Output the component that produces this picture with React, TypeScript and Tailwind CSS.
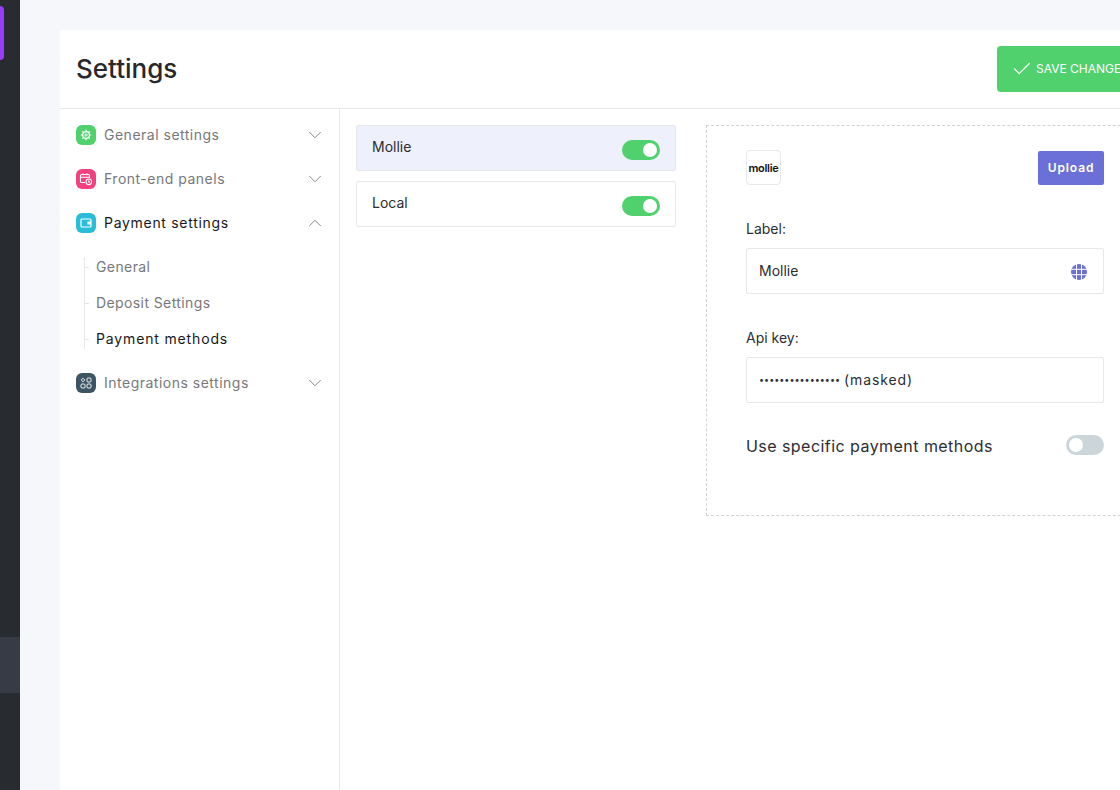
import React from "react";
import { Check, ChevronDown, ChevronUp } from "lucide-react";

const Toggle = ({ on = true }: { on?: boolean }) => {
  return on ? (
    <div className="flex h-5 w-[38px] items-center justify-end rounded-full bg-[#50d16e] pr-[3px]">
      <div className="h-[14px] w-[14px] rounded-full bg-white" />
    </div>
  ) : (
    <div className="flex h-5 w-[38px] items-center rounded-full bg-[#ccd6da] pl-[3px]">
      <div className="h-[14px] w-[14px] rounded-full bg-white" />
    </div>
  );
};

const GearIcon = () => (
  <svg viewBox="0 0 12 12" className="h-3 w-3" fill="none" stroke="white">
    <circle cx="6" cy="6" r="3.400" strokeWidth="1.200" />
    <circle cx="6" cy="6" r="1.100" strokeWidth="1" />
    <path d="M6 .8v1.600M6 9.600v1.600M.8 6h1.600M9.600 6h1.600M2.300 2.300l1.100 1.100M8.600 8.600l1.100 1.100M2.300 9.700l1.100-1.100M8.600 3.400l1.100-1.100" strokeWidth="1.200" />
  </svg>
);

const CalendarIcon = () => (
  <svg viewBox="0 0 14 14" className="h-[14px] w-[14px]" fill="none" stroke="white" strokeWidth="1.1">
    <path d="M6 10.500H2.500a1 1 0 0 1-1-1v-6a1 1 0 0 1 1-1h7a1 1 0 0 1 1 1V6" />
    <path d="M1.500 5.200h9M4 1.200v2M8 1.200v2" />
    <circle cx="9.800" cy="9.800" r="2.800" />
    <path d="M9.800 8.500v1.400h1.100" />
  </svg>
);

const WalletIcon = () => (
  <svg viewBox="0 0 12 12" className="h-3 w-3" fill="none" stroke="white" strokeWidth="1.200">
    <rect x="1" y="2" width="10" height="8" rx="1" />
    <path d="M11 5H8v2h3" fill="white" />
  </svg>
);

const AppsIcon = () => (
  <svg viewBox="0 0 12 12" className="h-3 w-3" fill="none" stroke="white" strokeWidth="0.900">
    <path d="M3 1.200 4.800 3 3 4.800 1.200 3z" />
    <rect x="7" y="1" width="4" height="4" rx="1" />
    <rect x="1" y="7" width="4" height="4" rx="1" />
    <rect x="7" y="7" width="4" height="4" rx="1" />
  </svg>
);

const GlobeIcon = () => (
  <svg viewBox="0 0 16 16" className="mt-[2px] h-4 w-4">
    <circle cx="8" cy="8" r="8" fill="#6a70d8" />
    <path d="M0 5.300h16M0 10.700h16M5.500 0v16M10.500 0v16" stroke="white" strokeWidth="1" />
  </svg>
);

const MenuRow = ({
  color,
  icon,
  label,
  spacing,
  open = false,
}: {
  color: string;
  icon: React.ReactNode;
  label: string;
  spacing: string;
  open?: boolean;
}) => (
  <div className="flex h-11 items-center">
    <div className={`flex h-5 w-5 items-center justify-center rounded-[6px] ${color}`}>{icon}</div>
    <span className={`ml-2 flex-1 text-sm ${spacing} ${open ? "text-[#16181b]" : "text-[#77787c]"}`}>{label}</span>
    {open ? (
      <ChevronUp className="mr-[-3px] h-[22px] w-[22px] text-[#7b7e83]" strokeWidth={1} />
    ) : (
      <ChevronDown className="mr-[-3px] h-[22px] w-[22px] text-[#7b7e83]" strokeWidth={1} />
    )}
  </div>
);

const SubItem = ({ label, spacing, active = false }: { label: string; spacing: string; active?: boolean }) => (
  <div className="flex h-9 items-center">
    <div className="mr-[7px] h-px w-[5px] bg-[#e4e7eb]" />
    <span className={`text-sm ${spacing} ${active ? "text-[#16181b]" : "text-[#77787c]"}`}>{label}</span>
  </div>
);

const MethodRow = ({ label, selected = false }: { label: string; selected?: boolean }) => (
  <div
    className={`flex h-[46px] items-center justify-between rounded-[2px] border border-[#e6e8ee] pl-[15px] pr-[15px] ${
      selected ? "bg-[#eef0fb]" : "bg-white"
    }`}
  >
    <span className="-mt-[2px] text-sm text-[#2b2d33]">{label}</span>
    <div className="mt-1">
      <Toggle />
    </div>
  </div>
);

export default function App() {
  return (
    <div
      className="flex h-[790px] w-[1120px] overflow-hidden bg-[#f5f7fb]"
      style={{ fontFamily: "Inter, 'Noto Sans', sans-serif" }}
    >
      <aside className="flex w-5 shrink-0 flex-col bg-[#282c31]">
        <div className="mt-[6px] h-[54px] w-1 rounded-r-[4px] bg-[#9a3cf7]" />
        <div className="mt-[577px] h-14 w-5 bg-[#373b46]" />
      </aside>

      <main className="ml-10 mt-[30px] w-[1100px] shrink-0 bg-white">
        <header className="flex h-[79px] items-center justify-between border-b border-[#e6e8ec] pl-4">
          <h1 className="-mt-[2px] text-[26px] font-medium text-[#26282c]">Settings</h1>
          <div className="mr-[-37px] flex h-[46px] w-[200px] items-center rounded-[4px] bg-[#50d16e] pl-[14px] text-xs text-white">
            <Check className="mr-[3px] h-[22px] w-[22px]" strokeWidth={1.3} />
            SAVE CHANGES
          </div>
        </header>

        <div className="flex h-[682px]">
          <nav className="w-[280px] shrink-0 border-r border-[#e6e8ec] px-4 pt-[4px]">
            <MenuRow color="bg-[#50d16e]" icon={<GearIcon />} label="General settings" spacing="tracking-[0.5px]" />
            <MenuRow color="bg-[#f5407f]" icon={<CalendarIcon />} label="Front-end panels" spacing="tracking-[0.5px]" />
            <MenuRow color="bg-[#29bdd9]" icon={<WalletIcon />} label="Payment settings" spacing="tracking-[0.7px]" open />
            <div className="relative ml-2 mt-1">
              <div className="absolute bottom-2 left-0 top-2 w-px bg-[#e4e7eb]" />
              <SubItem label="General" spacing="tracking-[0.4px]" />
              <SubItem label="Deposit Settings" spacing="tracking-[0.4px]" />
              <SubItem label="Payment methods" spacing="tracking-[0.85px]" active />
            </div>
            <div className="mt-[4px]">
              <MenuRow color="bg-[#3d5563]" icon={<AppsIcon />} label="Integrations settings" spacing="tracking-[0.5px]" />
            </div>
          </nav>

          <section className="ml-4 flex w-[320px] shrink-0 flex-col gap-[10px] pt-4">
            <MethodRow label="Mollie" selected />
            <MethodRow label="Local" />
          </section>

          <section className="ml-[30px] mt-4 h-[391px] w-[480px] shrink-0 border border-dashed border-[#cfd3d8] pl-[39px] pr-[81px] pt-6">
            <div className="flex items-center justify-between">
              <div className="flex h-[35px] w-[35px] items-center justify-center rounded-[4px] border border-[#e6e8ec]">
                <span className="mt-[2px] text-[11px] font-semibold tracking-[-0.3px] text-[#111]">mollie</span>
              </div>
              <div className="flex h-[34px] w-[66px] items-center justify-center rounded-[2px] bg-[#6a70d8] text-xs font-semibold tracking-[0.9px] text-white">
                Upload
              </div>
            </div>

            <label className="mt-[35px] block text-sm leading-[18px] text-[#2b2d33]">Label:</label>
            <div className="mt-[10px] flex h-[46px] items-center justify-between rounded-[2px] border border-[#e6e8ec] pl-3 pr-4">
              <span className="text-sm text-[#2b2d33]">Mollie</span>
              <GlobeIcon />
            </div>

            <label className="mt-[35px] block text-sm leading-[18px] text-[#2b2d33]">Api key:</label>
            <div className="mt-[10px] flex h-[46px] items-center rounded-[2px] border border-[#e6e8ec] pl-3">
              <span className="text-[9px] text-[#2b2d33]">••••••••••••••••</span>
              <span className="ml-1 text-sm tracking-[0.9px] text-[#2b2d33]">(masked)</span>
            </div>

            <div className="mt-8 flex h-5 items-center justify-between">
              <span className="mt-[2px] text-base tracking-[0.45px] text-[#2b2d33]">Use specific payment methods</span>
              <Toggle on={false} />
            </div>
          </section>
        </div>
      </main>
    </div>
  );
}
